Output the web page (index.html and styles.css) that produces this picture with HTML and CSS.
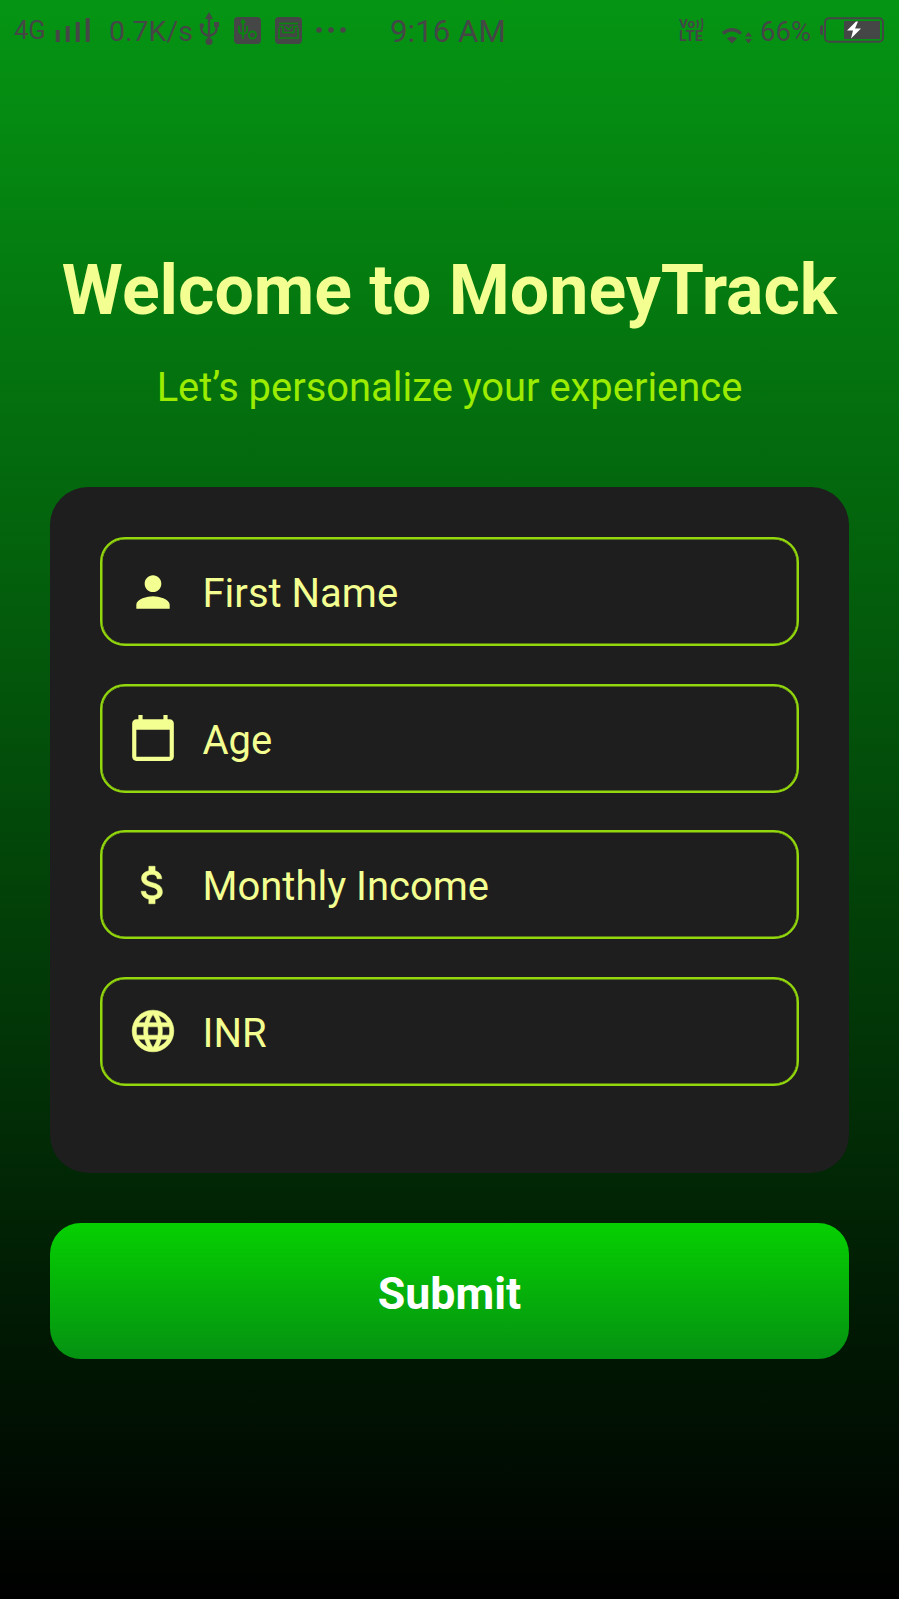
FILE: index.html
```html
<!DOCTYPE html>
<html lang="en">
<head>
<meta charset="utf-8">
<title>MoneyTrack</title>
<link rel="stylesheet" href="styles.css">
</head>
<body>
<div class="screen">
  <header class="status">
    <span class="network">4G</span>
    <svg class="signal" width="36" height="26" viewBox="0 0 36 26"><path d="M2.700 25V13M12.700 25V9M22.700 25V5M32.700 25V1" stroke="currentColor" stroke-width="4"/></svg>
    <span class="speed">0.7K/s</span>
    <svg class="usb" width="20" height="34" viewBox="0 0 20 34" fill="none" stroke="currentColor" stroke-width="2.400"><path d="M10 5v24M2.500 14v3q0 5 7.500 7q7.500-2 7.500-7v-3"/><path d="M10 0l4 7H6z" fill="currentColor" stroke="none"/><circle cx="10" cy="29.500" r="3.500" fill="currentColor" stroke="none"/><circle cx="2.800" cy="13.500" r="2.300" fill="currentColor" stroke="none"/><path d="M15 10h5v5h-5z" fill="currentColor" stroke="none"/></svg>
    <svg class="debug" width="27" height="27" viewBox="0 0 27 27"><rect width="27" height="27" rx="4" fill="currentColor"/><g fill="none" stroke="#08870f" stroke-width="1.700"><path d="M9 5v17M5 9v5q0 2 4 3q4-1 4-3V9M7 6l2-3 2 3"/><circle cx="18.500" cy="18" r="3.500" stroke-width="2"/></g></svg>
    <svg class="mail" width="27" height="27" viewBox="0 0 27 27"><rect width="27" height="27" rx="4" fill="currentColor"/><g fill="none" stroke="#08870f" stroke-width="1.500"><path d="M4 11v10h19V11M4 6.500h19M4 9.500h4v6h3M23 9.500h-4v6h-3"/><path d="M10.500 9.500l3 3 3.500-3M11 15.500h5"/></g></svg>
    <svg class="more" width="30" height="8" viewBox="0 0 30 8" fill="currentColor"><circle cx="3" cy="4" r="2.800"/><circle cx="15" cy="4" r="2.800"/><circle cx="27" cy="4" r="2.800"/></svg>
    <span class="time">9:16 AM</span>
    <span class="volte"><span class="vo">Vo<svg width="8" height="12" viewBox="0 0 8 12" fill="none" stroke="currentColor" stroke-width="1.700"><path d="M1 2q2 4 0 8M5.500 0q2 6 0 12"/></svg></span><span class="lte">LTE</span></span>
    <svg class="wifi" width="30" height="24" viewBox="0 0 30 24"><path d="M1 11.500Q10 4 19 11.500" fill="none" stroke="currentColor" stroke-width="3.400"/><path d="M5 16.500Q10 12.500 15 16.500L10 21.500z" fill="currentColor"/><path d="M26.500 10l3.500 4.500h-7zM26.500 21.500l-3.500-4.500h7z" fill="currentColor"/></svg>
    <span class="percent">66%</span>
    <svg class="battery" width="64" height="26" viewBox="0 0 64 26"><rect x="5" y="1.200" width="58" height="23.600" rx="4" fill="none" stroke="currentColor" stroke-width="2"/><path d="M0 10q0-2 3-2v10q-3 0-3-2z" fill="currentColor"/><rect x="24" y="4" width="36" height="18" fill="currentColor"/><path d="M36 4.500l-9 9h6l-2 8 10-10h-6l3-7z" fill="#fff"/></svg>
  </header>
  <main class="content">
    <h1 class="title">Welcome to MoneyTrack</h1>
    <p class="subtitle">Let’s personalize your experience</p>
    <form class="card">
      <div class="field"><svg class="icon" viewBox="0 0 24 24"><path d="M12 12c2.210 0 4-1.790 4-4s-1.790-4-4-4-4 1.790-4 4 1.790 4 4 4zm0 2c-2.670 0-8 1.340-8 4v2h16v-2c0-2.660-5.330-4-8-4z"/></svg><span>First Name</span></div>
      <div class="field"><svg class="icon" viewBox="0 0 24 24"><path d="M20 3h-1V1h-2v2H7V1H5v2H4c-1.100 0-2 .9-2 2v16c0 1.100.9 2 2 2h16c1.100 0 2-.9 2-2V5c0-1.100-.9-2-2-2zm0 18H4V8h16v13z"/></svg><span>Age</span></div>
      <div class="field"><svg class="icon icon-bold" viewBox="0 0 24 24"><path d="M11.800 10.900c-2.270-.59-3-1.200-3-2.150 0-1.090 1.010-1.850 2.700-1.850 1.780 0 2.440.85 2.500 2.100h2.210c-.07-1.720-1.120-3.300-3.210-3.810V3h-3v2.160c-1.940.42-3.500 1.680-3.500 3.610 0 2.310 1.910 3.460 4.700 4.130 2.500.6 3 1.480 3 2.410 0 .69-.49 1.790-2.700 1.790-2.060 0-2.870-.92-2.980-2.100h-2.200c.12 2.190 1.760 3.420 3.680 3.830V21h3v-2.150c1.950-.37 3.500-1.500 3.500-3.550 0-2.840-2.430-3.810-4.700-4.400z"/></svg><span>Monthly Income</span></div>
      <div class="field"><svg class="icon icon-bold" viewBox="0 0 24 24"><path d="M11.990 2C6.470 2 2 6.480 2 12s4.470 10 9.990 10C17.520 22 22 17.520 22 12S17.520 2 11.990 2zm6.930 6h-2.950c-.32-1.250-.78-2.450-1.380-3.560 1.840.63 3.370 1.910 4.330 3.560zM12 4.040c.83 1.200 1.480 2.530 1.910 3.960h-3.820c.43-1.430 1.080-2.760 1.910-3.960zM4.260 14C4.100 13.360 4 12.690 4 12s.1-1.360.26-2h3.380c-.08.66-.14 1.320-.14 2 0 .68.06 1.340.14 2H4.260zm.82 2h2.950c.32 1.250.78 2.450 1.380 3.560-1.840-.63-3.370-1.900-4.330-3.560zm2.950-8H5.080c.96-1.660 2.490-2.930 4.330-3.560C8.810 5.550 8.350 6.750 8.030 8zM12 19.960c-.83-1.200-1.480-2.530-1.910-3.960h3.820c-.43 1.430-1.080 2.760-1.910 3.960zM14.340 14H9.660c-.09-.66-.16-1.320-.16-2 0-.68.07-1.350.16-2h4.680c.09.65.16 1.320.16 2 0 .68-.07 1.340-.16 2zm.25 5.560c.6-1.110 1.060-2.310 1.380-3.560h2.950c-.96 1.650-2.490 2.930-4.330 3.560zM16.360 14c.08-.66.14-1.320.14-2 0-.68-.06-1.340-.14-2h3.380c.16.640.26 1.310.26 2s-.1 1.360-.26 2h-3.380z"/></svg><span>INR</span></div>
    </form>
    <button class="submit" type="button">Submit</button>
  </main>
</div>
</body>
</html>
```

FILE: styles.css
```css
* { box-sizing: border-box; }
body { margin: 0; font-family: Roboto, "Liberation Sans", sans-serif; }
.screen { width: 899px; height: 1599px; overflow: hidden; background: linear-gradient(#059513, #000); }
.status { display: flex; height: 60px; align-items: center; color: #444746; white-space: nowrap; }
.status > * { flex: none; }
.network { width: 38px; margin-left: 14px; font-size: 25.500px; }
.signal { margin: 0 0 1px 3px; }
.speed { width: 84px; margin-left: 18px; padding-top: 2px; font-size: 28.500px; }
.usb { margin: 0 0 2px 6px; }
.debug { margin-left: 15px; }
.mail { margin-left: 14px; }
.more { margin-left: 14px; }
.time { width: 118px; margin-left: 44px; padding-top: 3px; font-size: 31.300px; }
.volte { display: flex; flex-direction: column; width: 29px; margin-left: 171px; font-size: 13.500px; font-weight: 700; line-height: 13px; }
.vo { display: flex; gap: 1px; align-items: center; }
.lte { font-size: 14.500px; letter-spacing: .3px; }
.wifi { margin: 7px 0 0 14px; }
.percent { width: 54px; margin-left: 8px; padding-top: 3px; font-size: 27.500px; }
.battery { margin-left: 6px; }
.content { display: flex; flex-direction: column; padding: 189px 50px 0; }
.title { height: 82px; margin: 0 -20px; color: #f3ff90; font-size: 69.800px; line-height: 82px; text-align: center; white-space: nowrap; }
.subtitle { height: 48px; margin: 33px 0 0; color: #9bec00; font-size: 39.900px; line-height: 48px; text-align: center; }
.card { display: flex; flex-direction: column; gap: 37.600px; height: 686px; margin: 75px 0 50px; padding: 50px; border-radius: 38px; background: #1e1e1e; }
.field { display: flex; align-items: center; height: 109px; padding: 0 25.500px; border: 2px solid #93d80c; border-radius: 25px; box-shadow: inset 0 0 0 .5px #93d80c; color: #f3ff90; font-size: 40px; }
.field span { padding-top: 4px; }
.icon { width: 50px; height: 50px; margin-right: 25px; fill: #f3ff90; }
.icon-bold { stroke: #f3ff90; stroke-width: .25; }
.submit { height: 136px; padding: 5px 0 0; border: 0; border-radius: 31px; background: linear-gradient(#06d001, #059212); color: #fff; font-family: inherit; font-size: 44.700px; font-weight: 700; }
```
